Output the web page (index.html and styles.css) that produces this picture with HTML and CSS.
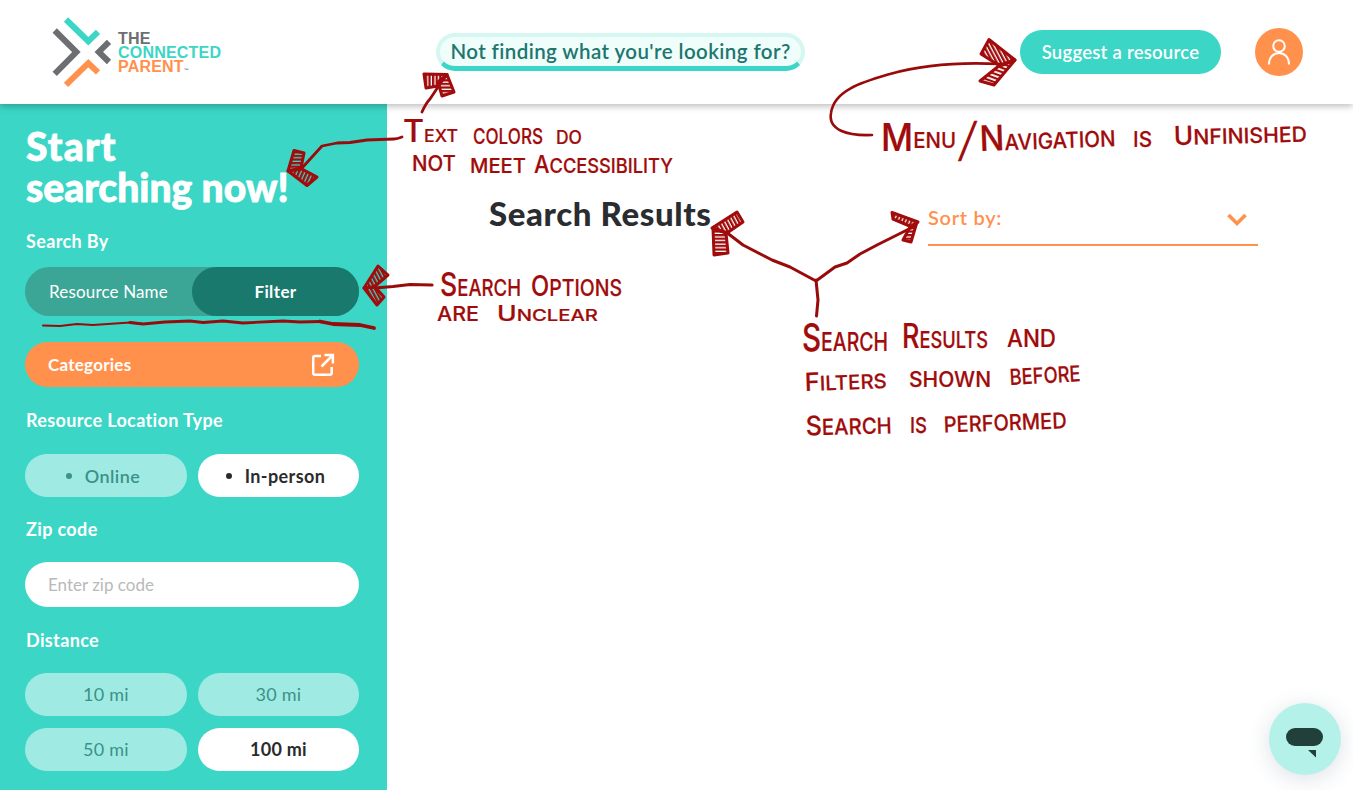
FILE: index.html
```html
<!DOCTYPE html>
<html lang="en">
<head>
<meta charset="utf-8">
<title>The Connected Parent</title>
<link rel="stylesheet" href="styles.css">
</head>
<body>
<header class="topbar">
  <div class="logo">
    <svg class="logo-mark" width="60" height="72" viewBox="52 16 60 72" fill="none" stroke-width="6">
      <path d="M66 19.5 88.3 41.2 98 31.8" stroke="#3bd6c6"/>
      <path d="M54.7 30.5 76.4 52 54.7 73.8M109 41.8 98.8 52 109 62" stroke="#6d6e71"/>
      <path d="M66 84.8 88.3 63.2 98 72.4" stroke="#ff914d"/>
    </svg>
    <div class="logo-text"><span>THE</span><span class="teal">CONNECTED</span><span class="orange">PARENT<small>™</small></span></div>
  </div>
  <a class="help">Not finding what you're looking for?</a>
  <button class="suggest">Suggest a resource</button>
  <div class="avatar">
    <svg width="24" height="28" viewBox="0 0 24 28" fill="none" stroke="#fff" stroke-width="2"><circle cx="12" cy="8" r="5.8"/><path d="M2 26.5C2 11 22 11 22 26.5"/></svg>
  </div>
</header>
<div class="body">
  <aside class="sidebar">
    <h1><span class="wide">Start</span><br>searching now!</h1>
    <div class="label by">Search By</div>
    <div class="toggle"><span class="name">Resource Name</span><span class="active">Filter</span></div>
    <button class="categories"><span>Categories</span>
      <svg width="24" height="24" viewBox="0 0 24 24" fill="none" stroke="#fff" stroke-width="2.5"><path d="M10 3H4.2Q2.2 3 2.2 5V19.7Q2.2 21.7 4.2 21.7H18.7Q20.7 21.7 20.7 19.7V14"/><path d="M13.5 1.9H21.9V10.5M21.5 2.3 10.5 13.5"/></svg>
    </button>
    <div class="label loc">Resource Location Type</div>
    <div class="pills"><span class="pill bullet medium">Online</span><span class="pill bullet on">In-person</span></div>
    <div class="label zip">Zip code</div>
    <div class="field">Enter zip code</div>
    <div class="label dist">Distance</div>
    <div class="pills"><span class="pill">10 mi</span><span class="pill">30 mi</span><span class="pill">50 mi</span><span class="pill on">100 mi</span></div>
  </aside>
  <main class="results">
    <h2>Search Results</h2>
    <div class="sort"><span>Sort by:</span>
      <svg width="20" height="14" viewBox="0 0 20 14" fill="none" stroke="#ff914d" stroke-width="3.6"><path d="M1.5 2 10 10.5 18.500 2"/></svg>
    </div>
  </main>
</div>
<div class="chat">
  <svg width="38" height="30" viewBox="0 0 38 30" fill="#213f3b"><rect x="0" y="0" width="37" height="18" rx="9"/><path d="M22 22H30V29.500Z"/></svg>
</div>
<svg class="notes" width="1353" height="790" viewBox="0 0 1353 790">
  <defs>
    <pattern id="h1" width="3.600" height="3.600" patternUnits="userSpaceOnUse"><path d="M1.100 0V4" stroke="#a10b0b" stroke-width="2.500"/></pattern>
    <pattern id="h2" width="3.600" height="3.600" patternUnits="userSpaceOnUse"><path d="M0 1.100H4" stroke="#a10b0b" stroke-width="2.400"/></pattern>
    <pattern id="h3" width="3.600" height="3.600" patternUnits="userSpaceOnUse" patternTransform="rotate(24)"><path d="M1.100 0V4" stroke="#a10b0b" stroke-width="2.500"/></pattern>
    <pattern id="h4" width="3.600" height="3.600" patternUnits="userSpaceOnUse" patternTransform="rotate(-28)"><path d="M1.100 0V4" stroke="#a10b0b" stroke-width="2.500"/></pattern>
    <pattern id="h5" width="4" height="4" patternUnits="userSpaceOnUse" patternTransform="rotate(20)"><path d="M0 1H4" stroke="#a10b0b" stroke-width="2.400"/></pattern>
  </defs>
  <g class="ink">
    <path stroke-width="2.8" d="M402 137Q397 139 394 139L367 140 350 142.500 337 143 322 146 302 168M422 112Q426 103 430 99L440 84"/>
    <path stroke-width="2.6" d="M872 135C847 136 828 130 831 113C834 90 863 82 890 74C925 64 960 62 1000 64"/>
    <path d="M432 285 410 284.500 393 286.500 375 288"/>
    <path stroke-width="3" d="M726 232 743 245 772 260 790 267 816 281 835 267 847 263 860 254 877 245 913 227M816 280 818 300 816.500 316"/>
    <path stroke-width="2" d="M43 325.500 60 326 77 324 93 325 130 322.500 143 324"/>
    <path stroke-width="2.8" d="M130 322.500 143 324 165 322 190 321 203 322.500 223 321 243 323 283 321 300 322 320 321.500"/>
    <path stroke-width="3.8" d="M320 321.500 333 324 360 325 374 328"/>
  </g>
  <g class="heads">
    <path fill="url(#h1)" d="M424 74 447 74.500 438 86 426 88Z"/><path fill="url(#h2)" d="M447 74.500 454 92 442 96 438 82Z"/>
    <path fill="url(#h2)" d="M294 150.500 304 153 301 168 288 171Z"/><path fill="url(#h3)" d="M288 171 302 169 317 177 307 185.500Z"/>
    <path fill="url(#h4)" d="M378 266 388 275 374 287 364 288Z"/><path fill="url(#h4)" d="M364 288 375 287 384 297 377 305Z"/>
    <path fill="url(#h4)" d="M989 39.500 1015 60 1000 66 981 54Z"/><path fill="url(#h5)" d="M1015 60 994 85 980 81 1000 65Z"/>
    <path fill="url(#h4)" d="M712 228 737 212 743 222 727 233Z"/><path fill="url(#h2)" d="M713 228 714 255 728 253 726 233Z"/>
    <path fill="url(#h3)" d="M892 212.500 918 222 912 227 893 219Z"/><path fill="url(#h2)" d="M917 222 911 242 903 240 910 227Z"/>
  </g>
  <g class="hand">
    <text x="403" y="142" textLength="55" lengthAdjust="spacingAndGlyphs"><tspan font-size="31">T</tspan><tspan font-size="17">EXT</tspan></text>
    <text x="473" y="143.500" textLength="70" lengthAdjust="spacingAndGlyphs" font-size="21">COLORS</text>
    <text x="556" y="144" textLength="26" lengthAdjust="spacingAndGlyphs" font-size="18">DO</text>
    <text x="412" y="171" textLength="44" lengthAdjust="spacingAndGlyphs" font-size="21">NOT</text>
    <text x="470" y="172.500" textLength="56" lengthAdjust="spacingAndGlyphs" font-size="20">MEET</text>
    <text x="534" y="173" textLength="139" lengthAdjust="spacingAndGlyphs"><tspan font-size="24">A</tspan><tspan font-size="20">CCESSIBILITY</tspan></text>
    <text x="881" y="148" textLength="75" lengthAdjust="spacingAndGlyphs"><tspan font-size="38" dy="3">M</tspan><tspan font-size="22" dy="-3">ENU</tspan></text>
    <text class="slash" x="0" y="0" font-size="46" textLength="14" lengthAdjust="spacingAndGlyphs" transform="translate(958 156) skewX(-10)">/</text>
    <text x="980" y="151" textLength="136" lengthAdjust="spacingAndGlyphs" transform="rotate(-2 980 151)"><tspan font-size="35">N</tspan><tspan font-size="22">AVIGATION</tspan></text>
    <text x="1133" y="146.500" textLength="19" lengthAdjust="spacingAndGlyphs" font-size="21">IS</text>
    <text x="1174" y="145" textLength="133" lengthAdjust="spacingAndGlyphs" transform="rotate(-1.500 1174 145)"><tspan font-size="26">U</tspan><tspan font-size="21">NFINISHED</tspan></text>
    <text x="440" y="296" textLength="81" lengthAdjust="spacingAndGlyphs"><tspan font-size="33">S</tspan><tspan font-size="23">EARCH</tspan></text>
    <text x="531" y="296" textLength="91" lengthAdjust="spacingAndGlyphs"><tspan font-size="28">O</tspan><tspan font-size="23">PTIONS</tspan></text>
    <text x="437" y="320.500" textLength="42" lengthAdjust="spacingAndGlyphs" font-size="20">ARE</text>
    <text x="497" y="320.500" textLength="101" lengthAdjust="spacingAndGlyphs"><tspan font-size="21">U</tspan><tspan font-size="16">NCLEAR</tspan></text>
    <text x="802" y="351" textLength="86" lengthAdjust="spacingAndGlyphs"><tspan font-size="38">S</tspan><tspan font-size="25">EARCH</tspan></text>
    <text x="902" y="348" textLength="86" lengthAdjust="spacingAndGlyphs"><tspan font-size="34">R</tspan><tspan font-size="23">ESULTS</tspan></text>
    <text x="1007" y="347" textLength="49" lengthAdjust="spacingAndGlyphs" font-size="24">AND</text>
    <text x="805" y="391" textLength="82" lengthAdjust="spacingAndGlyphs" transform="rotate(-2 805 391)"><tspan font-size="25">F</tspan><tspan font-size="20">ILTERS</tspan></text>
    <text x="909" y="387" textLength="82" lengthAdjust="spacingAndGlyphs" font-size="21">SHOWN</text>
    <text x="1010" y="385" textLength="71" lengthAdjust="spacingAndGlyphs" font-size="22" transform="rotate(-3 1010 385)">BEFORE</text>
    <text x="806" y="435.500" textLength="86" lengthAdjust="spacingAndGlyphs" transform="rotate(-1.500 806 435.500)"><tspan font-size="27">S</tspan><tspan font-size="22">EARCH</tspan></text>
    <text x="910" y="433" textLength="17" lengthAdjust="spacingAndGlyphs" font-size="22">IS</text>
    <text x="944" y="432.500" textLength="123" lengthAdjust="spacingAndGlyphs" font-size="22" transform="rotate(-2 944 432.500)">PERFORMED</text>
  </g>
</svg>
</body>
</html>
```
FILE: styles.css
```css
* { box-sizing: border-box; }
body { margin: 0; height: 790px; overflow: hidden; background: #fff; font-family: Lato, "Open Sans", sans-serif; color: #2a2c2f; position: relative; }
button { font: inherit; border: 0; }
.topbar { height: 104px; display: flex; align-items: center; padding: 0 50px 0 52px; box-shadow: 0 2px 7px rgba(0,0,0,.28); position: relative; }
.logo { display: flex; align-items: center; gap: 6px; width: 384px; }
.logo-text { display: flex; flex-direction: column; font: bold 16px/14px "Liberation Sans", sans-serif; color: #6d6e71; letter-spacing: .2px; padding-top: 4px; }
.logo-text small { font-size: 5px; letter-spacing: 0; color: #6d6e71; }
.logo-text .teal { color: #3bd6c6; }
.logo-text .orange { color: #ff914d; }
.help { width: 369px; height: 38px; border-radius: 19px; border: 4px solid #d5f7f1; border-bottom: 5px solid #3bd6c6; background: #effdfb; color: #20756e; font-weight: 600; font-size: 20.5px; letter-spacing: .42px; line-height: 28px; text-align: center; white-space: nowrap; }
.suggest { margin-left: 215px; width: 201px; height: 44px; border-radius: 22px; background: #3bd6c6; color: #fff; font-weight: 600; font-size: 18.5px; letter-spacing: .25px; padding: 0 0 1px; white-space: nowrap; }
.avatar { margin-left: 34px; width: 48px; height: 48px; border-radius: 50%; background: #ff914d; display: flex; align-items: center; justify-content: center; }
.body { display: flex; height: 686px; }
.sidebar { width: 387px; background: #3bd6c6; padding: 22px 28px 0 25px; color: #fff; }
h1 { margin: 0; padding-left: 1px; font-size: 39px; line-height: 41px; font-weight: 900; white-space: nowrap; -webkit-text-stroke: .8px #fff; }
.wide { letter-spacing: 1.2px; }
.label { font-weight: 700; font-size: 18px; line-height: 24px; letter-spacing: .36px; padding-left: 1px; }
.by { margin: 21px 0 14px; }
.toggle { height: 49px; border-radius: 25px; background: #3ba696; display: flex; font-size: 17px; line-height: 49px; text-align: center; letter-spacing: .15px; }
.toggle span { flex: 1; }
.toggle .active { background: #19796d; border-radius: 25px; font-weight: 700; letter-spacing: .4px; }
.categories { margin-top: 26px; width: 100%; height: 45px; border-radius: 23px; background: #ff914d; color: #fff; font-weight: 700; font-size: 17px; letter-spacing: .25px; display: flex; justify-content: space-between; align-items: center; padding: 0 24px 0 23px; }
.loc { margin: 21px 0 22px; }
.pills { display: grid; grid-template-columns: 162px 161px; gap: 12px 11px; }
.pill { height: 43px; border-radius: 22px; background: #9febe3; color: #3c9188; font-size: 18px; line-height: 42px; text-align: center; letter-spacing: .25px; }
.medium { font-weight: 600; }
.on { background: #fff; color: #292b2d; font-weight: 700; }
.bullet { display: flex; align-items: center; justify-content: center; gap: 13px; padding-right: 6px; letter-spacing: .4px; }
.bullet::before { content: ""; width: 6px; height: 6px; border-radius: 50%; background: currentColor; }
.zip { margin: 20px 0 21px; }
.field { height: 45px; border-radius: 23px; background: #fff; color: #b9b9b9; font-size: 17px; line-height: 45px; padding-left: 23px; }
.dist { margin: 21px 0; }
.results { flex: 1; display: flex; align-items: flex-start; padding: 90px 95px 0 102px; justify-content: space-between; }
h2 { margin: -1px 0 0; font-size: 33px; line-height: 40px; font-weight: 900; letter-spacing: .6px; white-space: nowrap; }
.sort { width: 330px; height: 52px; border-bottom: 2px solid #ff914d; display: flex; justify-content: space-between; color: #ff914d; font-weight: 600; font-size: 20px; letter-spacing: .7px; line-height: 46px; }
.sort svg { margin: 19px 11px 0 0; }
.chat { position: absolute; left: 1269px; top: 703px; width: 72px; height: 72px; border-radius: 50%; background: #b4f1e8; box-shadow: 0 4px 22px rgba(40,60,100,.16); padding: 25px 0 0 17px; }
.notes { position: absolute; left: 0; top: 0; pointer-events: none; }
.ink { fill: none; stroke: #990b0b; stroke-width: 3.2; stroke-linecap: round; stroke-linejoin: round; }
.heads { stroke: #a10b0b; stroke-width: 3; stroke-linejoin: round; }
.hand { fill: #a00c0c; font-family: Inter, sans-serif; font-weight: 500; stroke: #a00c0c; stroke-width: .2; stroke-linejoin: round; }
.slash { font-weight: 400; }
```
